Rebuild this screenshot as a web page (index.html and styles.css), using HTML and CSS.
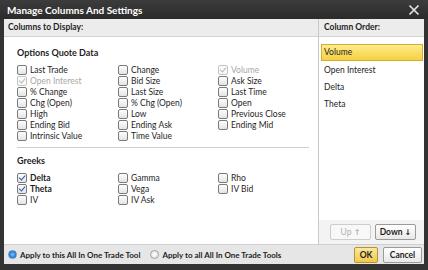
FILE: index.html
```html
<html>
<head>
<link rel="stylesheet" href="styles.css">
</head>
<body>
<div class="dialog">
  <div class="titlebar">
    <span class="title">Manage Columns And Settings</span>
    <svg class="close" viewBox="0 0 12 12" width="12" height="12">
      <path d="M1.5,1.5 L10.5,10.5 M10.5,1.5 L1.5,10.5" stroke="#e6e6e6" stroke-width="1.6" fill="none"/>
    </svg>
  </div>

  <div class="main">
    <div class="left">
      <div class="head">Columns to Display:</div>
      <div class="left-body">
        <div class="section">Options Quote Data</div>
        <div class="grid">
          <label class="item"><span class="cb"></span>Last Trade</label>
          <label class="item"><span class="cb"></span>Change</label>
          <label class="item dis"><span class="cb on"></span>Volume</label>
          <label class="item dis"><span class="cb on"></span>Open Interest</label>
          <label class="item"><span class="cb"></span>Bid Size</label>
          <label class="item"><span class="cb"></span>Ask Size</label>
          <label class="item"><span class="cb"></span>% Change</label>
          <label class="item"><span class="cb"></span>Last Size</label>
          <label class="item"><span class="cb"></span>Last Time</label>
          <label class="item"><span class="cb"></span>Chg (Open)</label>
          <label class="item"><span class="cb"></span>% Chg (Open)</label>
          <label class="item"><span class="cb"></span>Open</label>
          <label class="item"><span class="cb"></span>High</label>
          <label class="item"><span class="cb"></span>Low</label>
          <label class="item"><span class="cb"></span>Previous Close</label>
          <label class="item"><span class="cb"></span>Ending Bid</label>
          <label class="item"><span class="cb"></span>Ending Ask</label>
          <label class="item"><span class="cb"></span>Ending Mid</label>
          <label class="item"><span class="cb"></span>Intrinsic Value</label>
          <label class="item"><span class="cb"></span>Time Value</label>
        </div>
        <div class="sep"></div>
        <div class="section">Greeks</div>
        <div class="grid">
          <label class="item bold"><span class="cb on"></span>Delta</label>
          <label class="item"><span class="cb"></span>Gamma</label>
          <label class="item"><span class="cb"></span>Rho</label>
          <label class="item bold"><span class="cb on"></span>Theta</label>
          <label class="item"><span class="cb"></span>Vega</label>
          <label class="item"><span class="cb"></span>IV Bid</label>
          <label class="item"><span class="cb"></span>IV</label>
          <label class="item"><span class="cb"></span>IV Ask</label>
        </div>
      </div>
    </div>

    <div class="right">
      <div class="head">Column Order:</div>
      <div class="list">
        <div class="row sel">Volume</div>
        <div class="row">Open Interest</div>
        <div class="row">Delta</div>
        <div class="row">Theta</div>
      </div>
      <div class="order-btns">
        <span class="btn disabled">Up <b class="arr">&#8593;</b></span>
        <span class="btn">Down <b class="arr">&#8595;</b></span>
      </div>
    </div>
  </div>

  <div class="footer">
    <label class="radio"><span class="rd on"></span>Apply to this All In One Trade Tool</label>
    <label class="radio"><span class="rd"></span>Apply to all All In One Trade Tools</label>
    <span class="spacer"></span>
    <span class="btn ok">OK</span>
    <span class="btn cancel">Cancel</span>
  </div>
</div>
</body>
</html>
```

FILE: styles.css
```css
body {
  margin: 0;
  background: #2f2f2f;
  font-family: Lato, "Open Sans", sans-serif;
  font-size: 8.5px;
  color: #1e1e1e;
}

.dialog {
  width: 428px;
  height: 270px;
  display: flex;
  flex-direction: column;
  background: #333333;
  box-sizing: border-box;
  padding: 0 4px 6px 4px;
}

.titlebar {
  height: 19px;
  display: flex;
  align-items: center;
  justify-content: space-between;
  background: linear-gradient(#3c3c3c, #2b2b2b);
  margin: 0 -4px;
  padding: 0 8px 0 7px;
}

.title {
  color: #ffffff;
  font-weight: bold;
  font-size: 10px;
}

.main {
  flex: 1;
  display: flex;
  background: #fff;
}

.head {
  height: 17px;
  line-height: 17px;
  background: #ececec;
  border-bottom: 1px solid #d2d2d2;
  font-weight: bold;
  padding-left: 4px;
}

.left {
  flex: 1;
  display: flex;
  flex-direction: column;
  border-right: 1px solid #c9c9c9;
}

.left-body {
  padding: 10px 0 0 13px;
}

.section {
  font-weight: bold;
  font-size: 9px;
  line-height: 12px;
  margin-bottom: 5px;
}

.grid {
  display: grid;
  grid-template-columns: 101px 100px 100px;
  grid-auto-rows: 11px;
}

.item {
  display: flex;
  align-items: center;
  gap: 3px;
  white-space: nowrap;
}

.item.bold {
  font-weight: bold;
}

.item.dis {
  color: #a8a8a8;
}

.cb {
  width: 8px;
  height: 8px;
  border: 1px solid #7a7a7a;
  border-radius: 2px;
  background: linear-gradient(#fdfdfd, #e4e4e4);
  position: relative;
  flex: none;
}

.cb.on::after {
  content: "";
  position: absolute;
  left: 2px;
  top: 0px;
  width: 3px;
  height: 5px;
  border: solid #2858a8;
  border-width: 0 1.5px 1.5px 0;
  transform: rotate(40deg);
}

.dis .cb {
  border-color: #c4c4c4;
  background: #fafafa;
}

.dis .cb.on::after {
  border-color: #b5b5b5;
}

.sep {
  height: 1px;
  background: #cfcfcf;
  margin: 6px 9px 7px 0;
}

.right {
  width: 106px;
  display: flex;
  flex-direction: column;
}

.right .head {
  padding-left: 5px;
}

.list {
  flex: 1;
  padding: 7px 1px 0 2px;
}

.row {
  height: 17px;
  line-height: 17px;
  padding-left: 3px;
}

.row.sel {
  height: 15px;
  line-height: 15px;
  background: linear-gradient(#fdeb8e, #f6d13f);
  border: 1px solid #d4ae2e;
  margin-bottom: 1px;
  padding-left: 2px;
}

.order-btns {
  height: 24px;
  background: #f3f3f3;
  display: flex;
  align-items: center;
  justify-content: flex-end;
  gap: 4px;
  padding-right: 8px;
}

.btn {
  height: 14px;
  line-height: 14px;
  border: 1px solid #9a9a9a;
  border-radius: 2px;
  background: linear-gradient(#ffffff, #e8e8e8);
  font-weight: bold;
  text-align: center;
  white-space: nowrap;
  box-sizing: content-box;
}

.order-btns .btn {
  width: 39px;
}

.btn.disabled {
  color: #b0b0b0;
  border-color: #cdcdcd;
  background: #f8f8f8;
  font-weight: normal;
}

.arr {
  font-family: "DejaVu Sans", sans-serif;
  font-size: 8px;
}

.footer {
  height: 19px;
  display: flex;
  align-items: center;
  background: #e6e6e6;
  border-top: 1px solid #cfcfcf;
  padding: 0 2px 0 4px;
  gap: 10px;
}

.radio {
  display: flex;
  align-items: center;
  gap: 3px;
  font-weight: bold;
  font-size: 8px;
}

.rd {
  width: 7px;
  height: 7px;
  border-radius: 50%;
  border: 1px solid #a0a0a0;
  background: radial-gradient(#ffffff, #dcdcdc);
}

.rd.on {
  border-color: #5a8ec8;
  background: radial-gradient(#7fc0ff 0, #2f7fd6 60%, #1b5fb0 100%);
}

.spacer {
  flex: 1;
}

.footer .btn.ok {
  width: 22px;
  border-color: #b8942e;
  background: linear-gradient(#fbe8a0, #f0c84c);
  margin-right: -5px;
}

.footer .btn.cancel {
  width: 37px;
}
```
